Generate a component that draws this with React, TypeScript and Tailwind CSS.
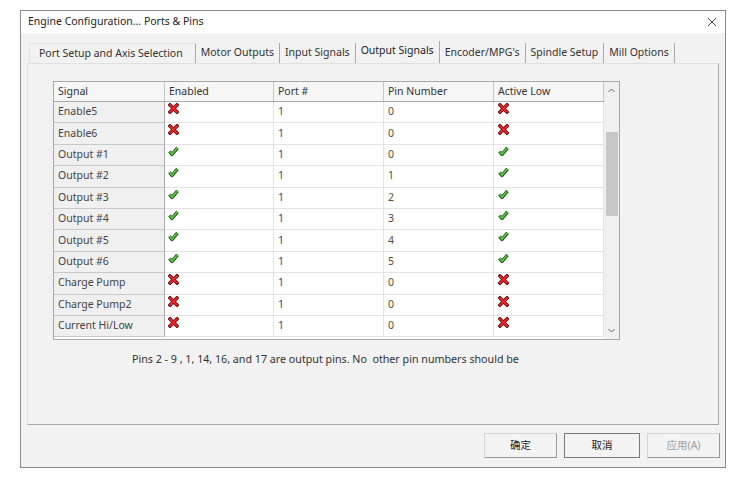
import React from "react";

const FONT = { fontFamily: '"Noto Sans", "Noto Sans CJK SC", sans-serif' };

function XIcon() {
  return (
    <svg width="11" height="11" viewBox="0 0 11 11">
      <path d="M2 2 L9 9 M9 2 L2 9" stroke="#5a1010" strokeWidth="3.6" strokeLinecap="square" fill="none" />
      <path d="M2.2 2.2 L8.8 8.8 M8.8 2.2 L2.2 8.8" stroke="#e3262b" strokeWidth="2.2" strokeLinecap="square" fill="none" />
    </svg>
  );
}

function CheckIcon() {
  return (
    <svg width="11" height="11" viewBox="0 0 11 11">
      <path d="M1.5 5.5 L4 8.5 L9.5 1.8" stroke="#1f4d14" strokeWidth="3.4" strokeLinejoin="round" fill="none" />
      <path d="M1.8 5.6 L4 8.2 L9.2 2" stroke="#5cc24a" strokeWidth="1.8" strokeLinejoin="round" fill="none" />
    </svg>
  );
}

type Row = { name: string; en: boolean; port: string; pin: string; low: boolean };

const rows: Row[] = [
  { name: "Enable5", en: false, port: "1", pin: "0", low: false },
  { name: "Enable6", en: false, port: "1", pin: "0", low: false },
  { name: "Output #1", en: true, port: "1", pin: "0", low: true },
  { name: "Output #2", en: true, port: "1", pin: "1", low: true },
  { name: "Output #3", en: true, port: "1", pin: "2", low: true },
  { name: "Output #4", en: true, port: "1", pin: "3", low: true },
  { name: "Output #5", en: true, port: "1", pin: "4", low: true },
  { name: "Output #6", en: true, port: "1", pin: "5", low: true },
  { name: "Charge Pump", en: false, port: "1", pin: "0", low: false },
  { name: "Charge Pump2", en: false, port: "1", pin: "0", low: false },
  { name: "Current Hi/Low", en: false, port: "1", pin: "0", low: false },
];

const tabs = [
  "Port Setup and Axis Selection",
  "Motor Outputs",
  "Input Signals",
  "Output Signals",
  "Encoder/MPG's",
  "Spindle Setup",
  "Mill Options",
];

export default function App() {
  return (
    <div className="w-[746px] h-[483px] bg-white pt-[10px] pl-[20px] text-[#333] text-[10.5px]" style={FONT}>
      <div className="w-[706px] h-[458px] border border-[#8c8c8c] bg-[#f2f2f2] flex flex-col">
        {/* title bar */}
        <div className="h-[22px] bg-white flex items-center justify-between pl-[7px] pr-[8px]">
          <span className="text-[#222]">Engine Configuration... Ports &amp; Pins</span>
          <svg width="10" height="10" viewBox="0 0 10 10">
            <path d="M1 1 L9 9 M9 1 L1 9" stroke="#444" strokeWidth="1" fill="none" />
          </svg>
        </div>
        {/* tabs */}
        <div className="flex items-end h-[30px] pl-[8px] pt-[8px]">
          {tabs.map((t, i) => (
            <div
              key={t}
              className={
                i === 3
                  ? "h-[22px] px-[5px] flex items-start pt-[2px] border-r border-[#a8a8a8] text-[#222]"
                  : i === 0
                  ? "h-[20px] pl-[9px] pr-[12px] flex items-center border-r border-[#a8a8a8] border-t border-l border-t-[#e4e4e4] border-l-[#e4e4e4] text-[#333]"
                  : "h-[20px] px-[5px] flex items-center border-r border-[#a8a8a8] text-[#333]"
              }
            >
              {t}
            </div>
          ))}
        </div>
        {/* tab panel */}
        <div className="mx-[6px] h-[362px] border-l border-r border-b border-l-[#e0e0e0] border-r-[#a9a9a9] border-b-[#a9a9a9] border-t border-t-[#e0e0e0] pl-[25px] pt-[17px]">
          <div className="w-[567px] h-[259px] border border-[#a9a9a9] bg-white flex overflow-hidden">
            <div className="w-[551px] flex flex-col">
              <div className="grid grid-cols-[111px_109px_110px_110px_110px] h-[20px] bg-[#f6f6f6] border-b border-[#a9a9a9]">
                {["Signal", "Enabled", "Port #", "Pin Number", "Active Low"].map((h) => (
                  <div key={h} className="border-r border-[#c8c8c8] pl-[4px] flex items-center text-[#333]">
                    {h}
                  </div>
                ))}
              </div>
              {rows.map((r) => (
                <div key={r.name} className="grid grid-cols-[111px_109px_110px_110px_110px] h-[21.4px] shrink-0">
                  <div className="bg-[#f0f0f0] border-r border-b border-r-[#a9a9a9] border-b-[#c9c9c9] pl-[4px] flex items-center text-[#444]">
                    {r.name}
                  </div>
                  <div className="border-r border-b border-[#e3e3e3] pl-[3px] pt-[1px]">
                    {r.en ? <CheckIcon /> : <XIcon />}
                  </div>
                  <div className="border-r border-b border-[#e3e3e3] pl-[4px] flex items-center text-[#3d4a66]">
                    {r.port}
                  </div>
                  <div className="border-r border-b border-[#e3e3e3] pl-[4px] flex items-center text-[#5a4a3a]">
                    {r.pin}
                  </div>
                  <div className="border-r border-b border-[#e3e3e3] pl-[4px] pt-[1px]">
                    {r.low ? <CheckIcon /> : <XIcon />}
                  </div>
                </div>
              ))}
            </div>
            {/* scrollbar */}
            <div className="w-[15px] bg-[#f0f0f0] flex flex-col items-center">
              <div className="h-[17px] flex items-center justify-center">
                <svg width="7" height="5" viewBox="0 0 7 5">
                  <path d="M0.5 4 L3.5 1 L6.5 4" stroke="#606060" strokeWidth="1" fill="none" />
                </svg>
              </div>
              <div className="mt-[33px] w-[12px] h-[84px] bg-[#c7c7c7]" />
              <div className="flex-1" />
              <div className="h-[17px] flex items-center justify-center">
                <svg width="7" height="5" viewBox="0 0 7 5">
                  <path d="M0.5 1 L3.5 4 L6.5 1" stroke="#606060" strokeWidth="1" fill="none" />
                </svg>
              </div>
            </div>
          </div>
          <div className="mt-[11px] pl-[79px] text-[#333] text-[10.7px]">
            Pins 2 - 9 , 1, 14, 16, and 17 are output pins. No&nbsp; other pin numbers should be
          </div>
        </div>
        {/* buttons */}
        <div className="flex justify-end gap-[7px] pr-[5px] pt-[8px]">
          <button className="w-[73px] h-[25px] bg-[#f3f3f3] border border-[#d5d5d5] border-b-[#9a9a9a] border-r-[#9a9a9a] text-[#222]">
            确定
          </button>
          <button className="w-[76px] h-[25px] bg-[#f3f3f3] border border-[#7a7a7a] text-[#222]">
            取消
          </button>
          <button className="w-[73px] h-[25px] bg-[#f3f3f3] border border-[#d5d5d5] border-b-[#9a9a9a] border-r-[#9a9a9a] text-[#a0a0a0]">
            应用(A)
          </button>
        </div>
      </div>
    </div>
  );
}
